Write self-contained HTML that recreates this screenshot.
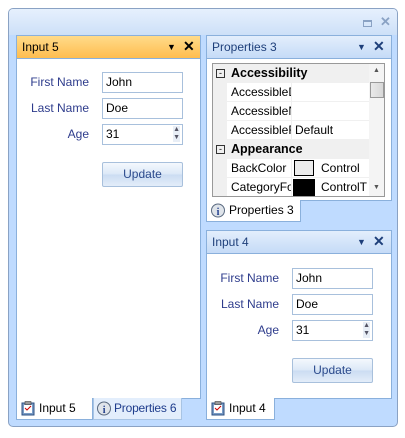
<!DOCTYPE html>
<html><head><style>
*{box-sizing:border-box;margin:0;padding:0}
body{width:405px;height:438px;background:#fff;font-family:"Liberation Sans",sans-serif;font-size:12px;position:relative;overflow:hidden}
.a{position:absolute}
.win{left:8px;top:8px;width:390px;height:419px;border:1px solid #8aa2c4;border-radius:5px;background:#bfdbff;overflow:hidden}
.tb{left:0;top:0;width:388px;height:26px;background:linear-gradient(#e6f0fd,#cde0f8)}
.hdr{height:23px;border-bottom:1px solid #8ab0dc;font-size:12px;line-height:22px;padding-left:5px;color:#1e3f7a}
.ph{background:linear-gradient(#e3eefc,#c5dbf7)}
.oh{background:linear-gradient(#ffdb8a,#ffbd4f);color:#000}
.pane{background:#fff;border:1px solid #8ab0dc}
.lbl{color:#2e3c8c;text-align:right;width:80px;font-size:12px}
.inp{width:81px;height:21px;border:1px solid #a8c0dc;background:#fff;font-size:12px;line-height:19px;padding-left:3px}
.btn{width:81px;height:25px;border:1px solid #a8c0dc;border-radius:2px;background:linear-gradient(#f4f8fd,#dbe8f7 50%,#cbdcf2 51%,#e3edf9);color:#2b4a8c;text-align:center;line-height:22px;font-size:12px}
.tab{height:22px;line-height:21px;font-size:12px;padding-left:22px;white-space:nowrap}
.row{height:19px;line-height:19px;border-bottom:1px solid #f0f0f0;position:relative;white-space:nowrap}
.nm{display:inline-block;width:60px;overflow:hidden;vertical-align:top}
.ico{position:absolute;left:4px;top:3px;width:14px;height:15px}
</style></head><body>
<div class="a win">
 <div class="a tb"></div>
 <div class="a" style="left:354px;top:11px;width:9px;height:7px;border:1px solid #8aa2c4;border-top-width:2px"></div>
 <div class="a" style="left:371px;top:5px;color:#8aa2c4;font-size:13px;font-weight:bold">✕</div>

 <div class="a pane" style="left:7px;top:26px;width:185px;height:364px"></div>
 <div class="a hdr oh" style="left:8px;top:27px;width:183px">Input 5<span class="a" style="left:150px;top:0;font-size:9px">▼</span><span class="a" style="left:166px;top:-1px;font-weight:bold;font-size:14px">✕</span></div>
 <div class="a lbl" style="left:0;top:66px">First Name</div>
 <div class="a lbl" style="left:0;top:92px">Last Name</div>
 <div class="a lbl" style="left:0;top:118px">Age</div>
 <div class="a inp" style="left:93px;top:63px">John</div>
 <div class="a inp" style="left:93px;top:89px">Doe</div>
 <div class="a inp" style="left:93px;top:115px">31<span class="a" style="right:2px;top:1px;font-size:7px;line-height:8px;color:#556;background:#e8eef6">▲<br>▼</span></div>
 <div class="a btn" style="left:93px;top:153px">Update</div>
 <div class="a tab" style="left:7px;top:389px;width:77px;background:#fff;border:1px solid #8ab0dc;border-top:none"><svg class="ico" viewBox="0 0 14 15"><rect x="1" y="2" width="12" height="12" fill="#7a9cc6" stroke="#2d4f80"/><rect x="3" y="4" width="8" height="8" fill="#fff"/><rect x="4" y="0.5" width="6" height="3" fill="#999" stroke="#444" stroke-width=".6"/><path d="M4 7l2 2 4-4" stroke="#c00" fill="none"/></svg>Input 5</div>
 <div class="a tab" style="left:84px;top:389px;width:89px;background:#e3eefc;border:1px solid #a8c4e4;border-top:none;color:#1e3c8c;padding-left:20px;letter-spacing:-0.2px"><svg class="ico" viewBox="0 0 14 15" style="left:3px"><circle cx="7" cy="7.5" r="6.5" fill="#dfe4ea" stroke="#5a6a80"/><text x="7" y="12" font-size="10" font-weight="bold" text-anchor="middle" fill="#1e3c8c" font-family="Liberation Serif">i</text></svg>Properties 6</div>

 <div class="a pane" style="left:197px;top:26px;width:186px;height:166px"></div>
 <div class="a hdr ph" style="left:198px;top:27px;width:184px">Properties 3<span class="a" style="left:150px;top:0;font-size:9px">▼</span><span class="a" style="left:166px;top:-1px;font-weight:bold;font-size:14px">✕</span></div>
 <div class="a" style="left:203px;top:54px;width:173px;height:134px;border:1px solid #999;background:#f0f0f0;overflow:hidden">
  <div class="a" style="left:14px;top:0;width:142px;height:132px;background:#fff"></div>
  <div class="a" style="left:0;top:0;width:156px">
   <div class="row" style="background:#f0f0f0;font-weight:bold;padding-left:18px;font-size:12.5px">Accessibility</div>
   <div class="row" style="padding-left:18px"><span class="nm">AccessibleDescription</span></div>
   <div class="row" style="padding-left:18px"><span class="nm">AccessibleName</span></div>
   <div class="row" style="padding-left:18px"><span class="nm">AccessibleRole</span><span class="a" style="left:82px">Default</span></div>
   <div class="row" style="background:#f0f0f0;font-weight:bold;padding-left:18px;font-size:12.5px">Appearance</div>
   <div class="row" style="padding-left:18px"><span class="nm">BackColor</span><span class="a" style="left:81px;top:1px;width:20px;height:16px;border:1px solid #000;background:#ececec"></span><span class="a" style="left:108px">Control</span></div>
   <div class="row" style="padding-left:18px"><span class="nm">CategoryForeColor</span><span class="a" style="left:80px;top:1px;width:22px;height:17px;background:#000"></span><span class="a" style="left:108px">ControlT</span></div>
  </div>
  <div class="a" style="left:78px;top:19px;width:1px;height:57px;background:#f0f0f0"></div>
  <div class="a" style="left:78px;top:95px;width:1px;height:40px;background:#f0f0f0"></div>
  <div class="a" style="left:3px;top:5px;width:9px;height:9px;border:1px solid #333;font-size:9px;line-height:6px;text-align:center">-</div>
  <div class="a" style="left:3px;top:81px;width:9px;height:9px;border:1px solid #333;font-size:9px;line-height:6px;text-align:center">-</div>
  <div class="a" style="left:156px;top:0;width:16px;height:132px;background:#f4f4f4"></div>
  <div class="a" style="left:160px;top:3px;font-size:7px;color:#555">▲</div>
  <div class="a" style="left:157px;top:18px;width:14px;height:16px;border:1px solid #9a9a9a;background:linear-gradient(90deg,#eaeaea,#d8d8d8)"></div>
  <div class="a" style="left:160px;top:120px;font-size:7px;color:#555">▼</div>
 </div>
 <div class="a tab" style="left:197px;top:191px;width:95px;background:#fff;border:1px solid #8ab0dc;border-top:none"><svg class="ico" viewBox="0 0 14 15"><circle cx="7" cy="7.5" r="6.5" fill="#dfe4ea" stroke="#5a6a80"/><text x="7" y="12" font-size="10" font-weight="bold" text-anchor="middle" fill="#1e3c8c" font-family="Liberation Serif">i</text></svg>Properties 3</div>

 <div class="a pane" style="left:197px;top:221px;width:186px;height:169px"></div>
 <div class="a hdr ph" style="left:198px;top:222px;width:184px">Input 4<span class="a" style="left:150px;top:0;font-size:9px">▼</span><span class="a" style="left:166px;top:-1px;font-weight:bold;font-size:14px">✕</span></div>
 <div class="a lbl" style="left:190px;top:262px">First Name</div>
 <div class="a lbl" style="left:190px;top:288px">Last Name</div>
 <div class="a lbl" style="left:190px;top:314px">Age</div>
 <div class="a inp" style="left:283px;top:259px">John</div>
 <div class="a inp" style="left:283px;top:285px">Doe</div>
 <div class="a inp" style="left:283px;top:311px">31<span class="a" style="right:2px;top:1px;font-size:7px;line-height:8px;color:#556;background:#e8eef6">▲<br>▼</span></div>
 <div class="a btn" style="left:283px;top:349px">Update</div>
 <div class="a tab" style="left:197px;top:389px;width:69px;background:#fff;border:1px solid #8ab0dc;border-top:none"><svg class="ico" viewBox="0 0 14 15"><rect x="1" y="2" width="12" height="12" fill="#7a9cc6" stroke="#2d4f80"/><rect x="3" y="4" width="8" height="8" fill="#fff"/><rect x="4" y="0.5" width="6" height="3" fill="#999" stroke="#444" stroke-width=".6"/><path d="M4 7l2 2 4-4" stroke="#c00" fill="none"/></svg>Input 4</div>
</div>
</body></html>
